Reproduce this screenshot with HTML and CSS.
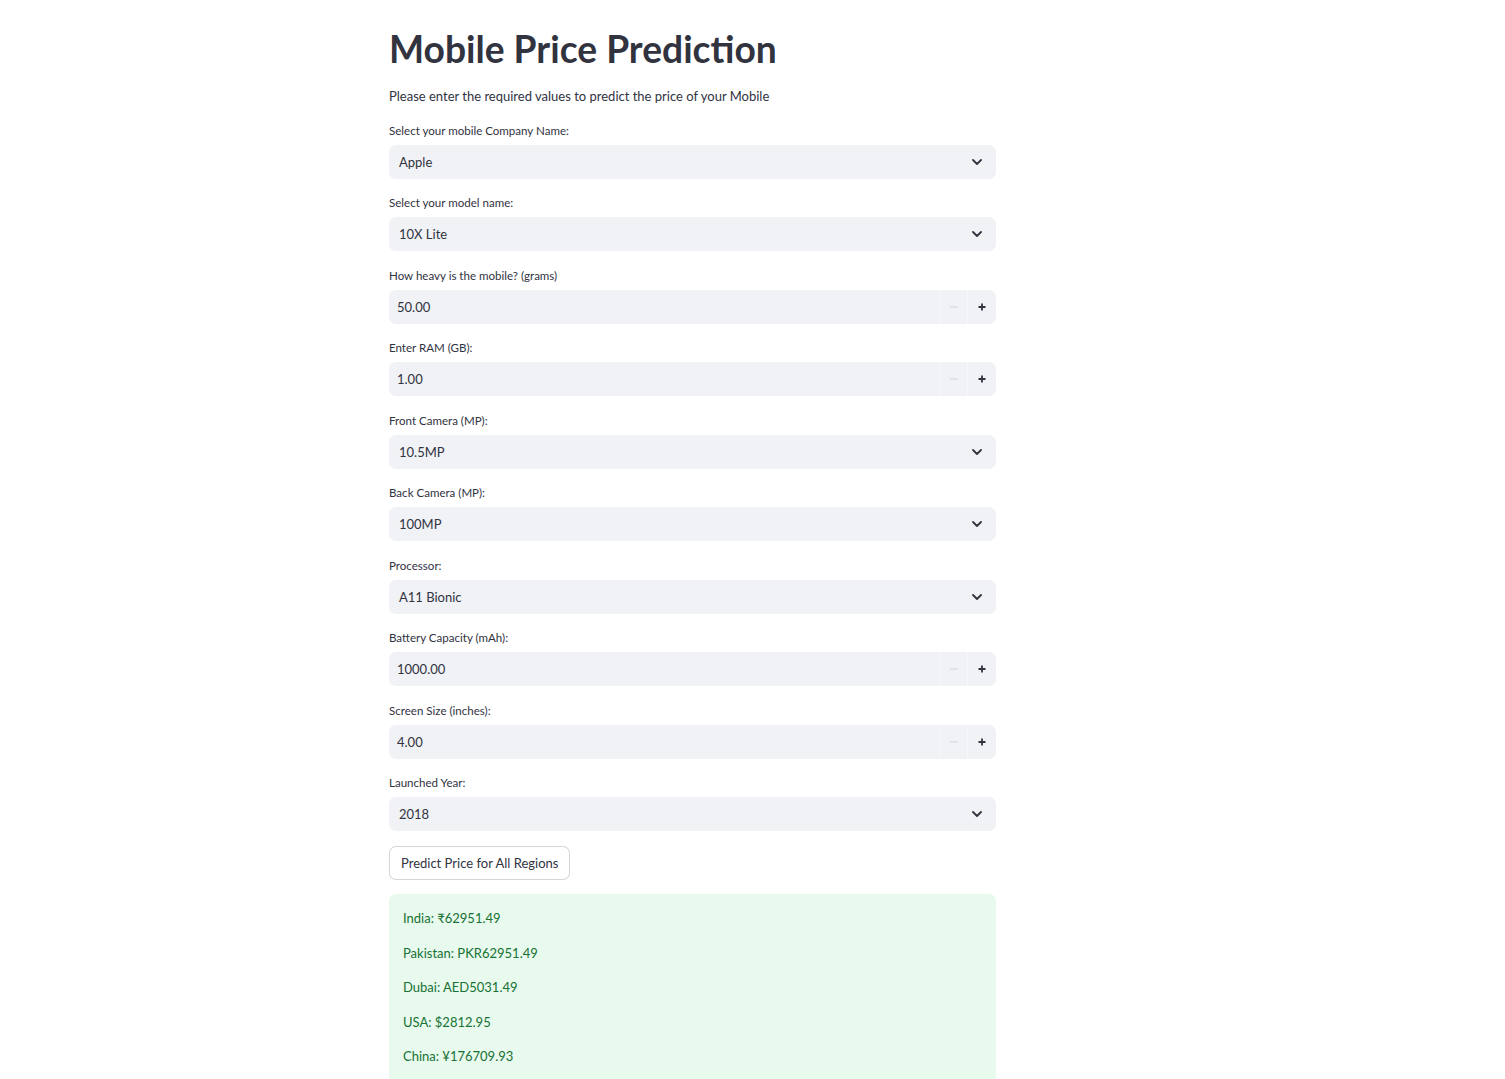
FILE: index.html
```html
<!DOCTYPE html>
<html lang="en">
<head>
<meta charset="utf-8">
<title>Mobile Price Prediction</title>
<link rel="stylesheet" href="styles.css">
</head>
<body>
<main class="main">
  <h1 class="title">Mobile Price Prediction</h1>
  <p class="intro">Please enter the required values to predict the price of your Mobile</p>

  <div class="field">
    <label class="label">Select your mobile Company Name:</label>
    <div class="select"><span>Apple</span><svg class="chev" viewBox="0 0 10 6" width="10" height="6"><path d="M1 1l4 4 4-4" fill="none" stroke="#31333f" stroke-width="1.8" stroke-linecap="round" stroke-linejoin="round"/></svg></div>
  </div>

  <div class="field">
    <label class="label">Select your model name:</label>
    <div class="select"><span>10X Lite</span><svg class="chev" viewBox="0 0 10 6" width="10" height="6"><path d="M1 1l4 4 4-4" fill="none" stroke="#31333f" stroke-width="1.8" stroke-linecap="round" stroke-linejoin="round"/></svg></div>
  </div>

  <div class="field">
    <label class="label">How heavy is the mobile? (grams)</label>
    <div class="number"><span class="num-val">50.00</span><span class="step minus"><svg viewBox="0 0 8 8" width="8" height="8"><path d="M0 4h8" stroke="#d5d7dd" stroke-width="1.2"/></svg></span><span class="step plus"><svg viewBox="0 0 8 8" width="8" height="8"><path d="M4 0.5v7M0.5 4h7" stroke="#31333f" stroke-width="1.8"/></svg></span></div>
  </div>

  <div class="field">
    <label class="label">Enter RAM (GB):</label>
    <div class="number"><span class="num-val">1.00</span><span class="step minus"><svg viewBox="0 0 8 8" width="8" height="8"><path d="M0 4h8" stroke="#d5d7dd" stroke-width="1.2"/></svg></span><span class="step plus"><svg viewBox="0 0 8 8" width="8" height="8"><path d="M4 0.5v7M0.5 4h7" stroke="#31333f" stroke-width="1.8"/></svg></span></div>
  </div>

  <div class="field">
    <label class="label">Front Camera (MP):</label>
    <div class="select"><span>10.5MP</span><svg class="chev" viewBox="0 0 10 6" width="10" height="6"><path d="M1 1l4 4 4-4" fill="none" stroke="#31333f" stroke-width="1.8" stroke-linecap="round" stroke-linejoin="round"/></svg></div>
  </div>

  <div class="field">
    <label class="label">Back Camera (MP):</label>
    <div class="select"><span>100MP</span><svg class="chev" viewBox="0 0 10 6" width="10" height="6"><path d="M1 1l4 4 4-4" fill="none" stroke="#31333f" stroke-width="1.8" stroke-linecap="round" stroke-linejoin="round"/></svg></div>
  </div>

  <div class="field">
    <label class="label">Processor:</label>
    <div class="select"><span>A11 Bionic</span><svg class="chev" viewBox="0 0 10 6" width="10" height="6"><path d="M1 1l4 4 4-4" fill="none" stroke="#31333f" stroke-width="1.8" stroke-linecap="round" stroke-linejoin="round"/></svg></div>
  </div>

  <div class="field">
    <label class="label">Battery Capacity (mAh):</label>
    <div class="number"><span class="num-val">1000.00</span><span class="step minus"><svg viewBox="0 0 8 8" width="8" height="8"><path d="M0 4h8" stroke="#d5d7dd" stroke-width="1.2"/></svg></span><span class="step plus"><svg viewBox="0 0 8 8" width="8" height="8"><path d="M4 0.5v7M0.5 4h7" stroke="#31333f" stroke-width="1.8"/></svg></span></div>
  </div>

  <div class="field">
    <label class="label">Screen Size (inches):</label>
    <div class="number"><span class="num-val">4.00</span><span class="step minus"><svg viewBox="0 0 8 8" width="8" height="8"><path d="M0 4h8" stroke="#d5d7dd" stroke-width="1.2"/></svg></span><span class="step plus"><svg viewBox="0 0 8 8" width="8" height="8"><path d="M4 0.5v7M0.5 4h7" stroke="#31333f" stroke-width="1.8"/></svg></span></div>
  </div>

  <div class="field">
    <label class="label">Launched Year:</label>
    <div class="select"><span>2018</span><svg class="chev" viewBox="0 0 10 6" width="10" height="6"><path d="M1 1l4 4 4-4" fill="none" stroke="#31333f" stroke-width="1.8" stroke-linecap="round" stroke-linejoin="round"/></svg></div>
  </div>

  <button class="btn" type="button">Predict Price for All Regions</button>

  <div class="success">
    <p>India: ₹62951.49</p>
    <p>Pakistan: PKR62951.49</p>
    <p>Dubai: AED5031.49</p>
    <p>USA: $2812.95</p>
    <p>China: ¥176709.93</p>
  </div>
</main>
</body>
</html>
```

FILE: styles.css
```css
html, body {
  margin: 0;
  padding: 0;
  background: #ffffff;
}
body {
  font-family: Lato, "Noto Sans", sans-serif;
  color: #31333f;
}
.main {
  width: 607px;
  margin-left: 389px;
  padding-top: 27px;
  display: flex;
  flex-direction: column;
}
.title {
  margin: 0;
  font-size: 37.2px;
  line-height: 44px;
  font-weight: 700;
}
.intro {
  margin: 15px 0 0 0;
  font-size: 13px;
  line-height: 21px;
}
.field {
  display: flex;
  flex-direction: column;
  margin-top: 14.5px;
}
.intro + .field {
  margin-top: 13.5px;
}
.label {
  font-size: 11.55px;
  line-height: 19px;
  margin-bottom: 5px;
}
.select, .number {
  height: 34px;
  background: #f0f2f6;
  border-radius: 7px;
  display: flex;
  align-items: center;
  font-size: 13px;
}
.select {
  padding: 0 14px 0 10px;
  justify-content: space-between;
}
.chev {
  display: block;
}
.number {
  padding-left: 8px;
}
.num-val {
  flex: 1;
}
.step {
  width: 28px;
  height: 34px;
  display: flex;
  align-items: center;
  justify-content: center;
  border-left: 1px solid #f6f7fa;
  box-sizing: border-box;
}
.step svg {
  display: block;
}
.plus {
  margin-right: 1px;
}
.btn {
  align-self: flex-start;
  margin-top: 15px;
  height: 34px;
  padding: 0 11px;
  background: #ffffff;
  border: 1px solid rgba(49, 51, 63, 0.2);
  border-radius: 7px;
  font-family: inherit;
  font-size: 13px;
  color: #31333f;
}
.success {
  margin-top: 14px;
  background: #e8f9ee;
  border-radius: 7px;
  padding: 14px 14px 2px;
  color: #177233;
  font-size: 13px;
}
.success p {
  margin: 0 0 13.5px 0;
  line-height: 21px;
}
```
